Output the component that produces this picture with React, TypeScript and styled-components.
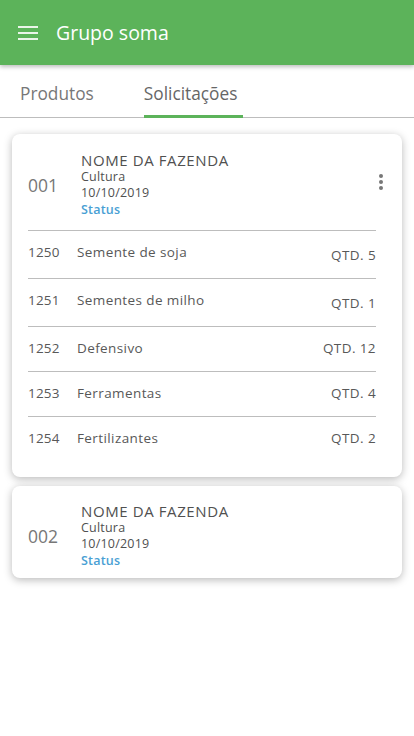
import React from "react";
import styled, { createGlobalStyle } from "styled-components";

const Global = createGlobalStyle`
  html, body { margin: 0; padding: 0; background: #fff; }
  body { font-family: "Open Sans", "Noto Sans", sans-serif; -webkit-font-smoothing: antialiased; }
  * { box-sizing: border-box; }
`;

const Page = styled.div`
  width: 414px;
  min-height: 736px;
  background: #fff;
  display: flex;
  flex-direction: column;
`;

const AppBar = styled.header`
  height: 65px;
  background: #5cb35a;
  display: flex;
  align-items: center;
  padding-left: 18px;
  gap: 18px;
  box-shadow: 0 2px 4px rgba(0, 0, 0, 0.25);
  position: relative;
  z-index: 1;
`;

const Title = styled.h1`
  margin: 0;
  color: #fff;
  font-size: 19.5px;
  font-weight: 400;
  line-height: 24px;
`;

const Tabs = styled.nav`
  height: 53px;
  display: flex;
  align-items: flex-end;
  padding-left: 20px;
  gap: 50px;
  border-bottom: 1px solid #bdbdbd;
`;

const Tab = styled.div<{ $active?: boolean }>`
  font-size: 17.3px;
  line-height: 24px;
  color: ${(p) => (p.$active ? "#666" : "#777")};
  padding: 0 ${(p) => (p.$active ? "6px" : "0")} 9px 0;
  border-bottom: 3px solid ${(p) => (p.$active ? "#5cb35a" : "transparent")};
  margin-bottom: -1px;
`;

const List = styled.main`
  display: flex;
  flex-direction: column;
  gap: 9px;
  padding: 16px 12px;
`;

const Card = styled.section<{ $compact?: boolean }>`
  background: #fff;
  border-radius: 8px;
  box-shadow: 0 2px 8px rgba(0, 0, 0, 0.28);
  padding: ${(p) => (p.$compact ? "16px 26px 9px 16px" : "17px 26px 13px 16px")};
`;

const CardHead = styled.div`
  display: flex;
  align-items: center;
`;

const OrderNo = styled.div`
  width: 53px;
  font-size: 17.5px;
  color: #777;
  line-height: 24px;
`;

const Info = styled.div`
  flex: 1;
  display: flex;
  flex-direction: column;
`;

const Farm = styled.div`
  font-size: 15px;
  line-height: 18px;
  color: #505050;
  letter-spacing: 0.6px;
`;

const Meta = styled.div`
  font-size: 12.5px;
  line-height: 16px;
  color: #505050;
  letter-spacing: 0.2px;
`;

const Status = styled.div`
  font-size: 12.5px;
  line-height: 16px;
  color: #4a9fd4;
  font-weight: 600;
  margin-top: 1px;
  letter-spacing: 0.2px;
`;

const Kebab = styled.button`
  border: 0;
  background: none;
  padding: 0;
  width: 10px;
  margin-right: -10px;
  align-self: flex-start;
  margin-top: 23px;
  display: flex;
  flex-direction: column;
  align-items: center;
  gap: 2px;
`;

const Dot = styled.span`
  width: 4px;
  height: 4px;
  border-radius: 50%;
  background: #777;
`;

const Items = styled.div`
  margin-top: 12px;
`;

const Row = styled.div<{ $last?: boolean }>`
  display: flex;
  align-items: flex-start;
  border-top: 1px solid #bdbdbd;
  padding-top: 12px;
  padding-bottom: ${(p) => (p.$last ? "17px" : "14px")};
  font-size: 13.5px;
  line-height: 18px;
  color: #585858;
`;

const ItemCode = styled.span`
  width: 49px;
  letter-spacing: 0.2px;
`;

const ItemName = styled.span`
  flex: 1;
  letter-spacing: 0.4px;
`;

const Qty = styled.span<{ $tall?: boolean }>`
  margin-top: ${(p) => (p.$tall ? "3px" : "0")};
  letter-spacing: 0.4px;
`;

const MenuIcon = () => (
  <svg width="20" height="14" viewBox="0 0 20 14" aria-hidden>
    <rect x="0" y="0" width="20" height="2" fill="#eaf5e9" />
    <rect x="0" y="6" width="20" height="2" fill="#eaf5e9" />
    <rect x="0" y="12" width="20" height="2" fill="#eaf5e9" />
  </svg>
);

const items = [
  { code: "1250", name: "Semente de soja", qty: 5, tall: true },
  { code: "1251", name: "Sementes de milho", qty: 1, tall: true },
  { code: "1252", name: "Defensivo", qty: 12 },
  { code: "1253", name: "Ferramentas", qty: 4 },
  { code: "1254", name: "Fertilizantes", qty: 2 },
];

export default function App() {
  return (
    <Page>
      <Global />
      <AppBar>
        <MenuIcon />
        <Title>Grupo soma</Title>
      </AppBar>
      <Tabs>
        <Tab>Produtos</Tab>
        <Tab $active>Solicitações</Tab>
      </Tabs>
      <List>
        <Card>
          <CardHead>
            <OrderNo>001</OrderNo>
            <Info>
              <Farm>NOME DA FAZENDA</Farm>
              <Meta>Cultura</Meta>
              <Meta>10/10/2019</Meta>
              <Status>Status</Status>
            </Info>
            <Kebab aria-label="mais">
              <Dot />
              <Dot />
              <Dot />
            </Kebab>
          </CardHead>
          <Items>
            {items.map((it, i) => (
              <Row key={it.code} $last={i === items.length - 1}>
                <ItemCode>{it.code}</ItemCode>
                <ItemName>{it.name}</ItemName>
                <Qty $tall={it.tall}>QTD. {it.qty}</Qty>
              </Row>
            ))}
          </Items>
        </Card>
        <Card $compact>
          <CardHead>
            <OrderNo>002</OrderNo>
            <Info>
              <Farm>NOME DA FAZENDA</Farm>
              <Meta>Cultura</Meta>
              <Meta>10/10/2019</Meta>
              <Status>Status</Status>
            </Info>
          </CardHead>
        </Card>
      </List>
    </Page>
  );
}
